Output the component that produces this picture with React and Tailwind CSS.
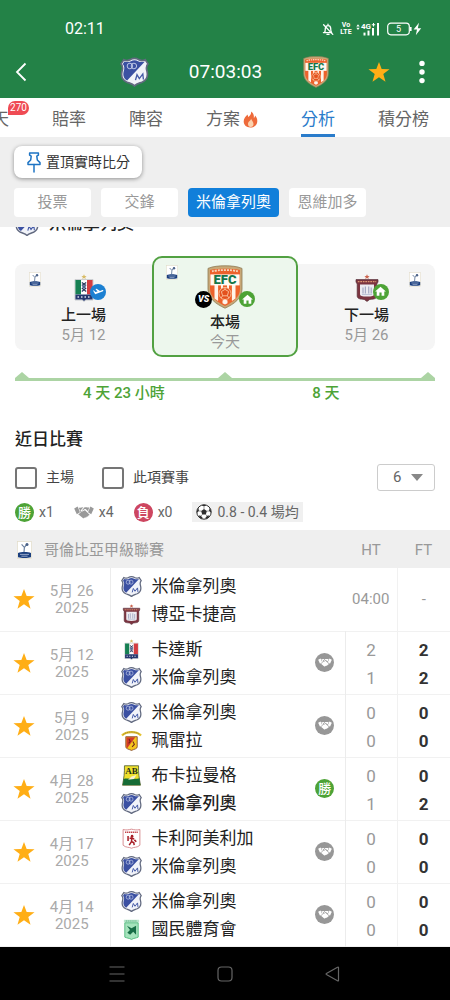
import React, { useState } from 'react';
import { MdHome } from 'react-icons/md';
import clsx from 'clsx';

/* ---------- Icons ---------- */

const Star = ({ className }) => (
    <svg viewBox="0 0 24 24" className={className} fill="#ffae16" aria-hidden="true">
        <polygon points="12,1 14.9,8.8 23.5,9.1 16.7,14.3 19.1,22.6 12,17.7 4.9,22.6 7.3,14.3 0.5,9.1 9.1,8.8" />
    </svg>
);

const BellOff = () => (
    <svg viewBox="0 0 12 13" className="w-3 h-[13px]" fill="none" stroke="#fff" strokeWidth="1.3" strokeLinecap="round" strokeLinejoin="round">
        <path d="M2.5 9.5C3.4 8.4 3.2 7 3.3 5.4C3.5 3.6 4.5 2.6 6 2.6C7.6 2.6 8.6 3.7 8.7 5.4C8.8 7 8.6 8.4 9.6 9.5M1.4 9.6H8.6M5 11.4H7M6 1.2V2.4" />
        <path d="M1.6 1.8L10.8 11.4" />
    </svg>
);

const SignalIcon = () => (
    <svg viewBox="0 0 24 14" className="w-6 h-3.5" fill="#fff">
        <path d="M0.3 4.4L2 2.3L3.7 4.4ZM0.3 5.8H3.7L2 7.9Z" />
        <text x="5" y="7" fontSize="8" fontWeight="700">4G</text>
        <path d="M17 1h1v1.2h1.2v1H18v1.2h-1V3.2h-1.2v-1H17z" />
        <rect x="7.5" y="10.6" width="2" height="2.9" />
        <rect x="11.5" y="8.6" width="2" height="4.9" />
        <rect x="16" y="6" width="2" height="7.5" />
        <rect x="21" y="1" width="2" height="12.5" />
    </svg>
);

const BatteryIcon = () => (
    <svg viewBox="0 0 35 14" className="w-[35px] h-3.5">
        <rect x="0.7" y="1.2" width="21.6" height="11.6" rx="3.2" fill="none" stroke="#fff" strokeWidth="1.2" />
        <path d="M23.8 5v4" stroke="#fff" strokeWidth="1.6" />
        <text x="11.5" y="10" fontSize="9" textAnchor="middle" fill="#fff">5</text>
        <path d="M32 0.8L26.6 7.6H30L28.8 13.2L34.2 6.2H30.8Z" fill="#fff" />
    </svg>
);

const PinIcon = () => (
    <svg viewBox="0 0 14 21" className="w-3.5 h-[21px]" fill="none" stroke="#1e74c4" strokeWidth="1.5" strokeLinejoin="round">
        <path d="M2.6 1H11.4V3.2L9.8 4.2L10.3 8L13 10.6V12.4H1V10.6L3.7 8L4.2 4.2L2.6 3.2Z" />
        <path d="M7 12.4V20" strokeLinecap="round" />
    </svg>
);

const Flame = () => (
    <svg viewBox="0 0 15 17" className="w-[15px] h-[17px]">
        <path d="M8 0.5C8.6 3 7 4.4 5.4 6C4.9 5.3 4.7 4.4 4.8 3.5C2.2 5.5 0.6 8 0.7 10.8C0.9 14.2 3.6 16.5 7.2 16.5C11.2 16.5 14.2 14 14.3 10.2C14.4 7.6 13.2 5.7 12 4.6C12 5.8 11.6 6.6 10.8 7.2C11.2 4.4 10.4 1.9 8 0.5Z" fill="#ee6a3a" />
        <path d="M8 7.5C8.3 9.4 5 10.4 5 13C5 14.8 6.2 16 7.7 16C9.4 16 10.6 14.7 10.5 12.9C10.4 10.9 8.8 9.8 8 7.5Z" fill="#fbd2ae" />
    </svg>
);

const Handshake = ({ className }) => (
    <svg viewBox="0 0 20 13" className={className} fill="currentColor">
        <path d="M0.2 2.6L3.6 0.6L6 6.2L2.8 8.2Z" />
        <path d="M19.8 2.6L16.4 0.6L14 6.2L17.2 8.2Z" />
        <path d="M4.8 1.4C6.4 2 7.6 1.2 9.4 1.3L6.6 4.4C6.6 5.8 8.6 6 10.2 4.4L11 4.3L15.4 8.4C15.8 9.2 14.9 9.9 14.2 9.3C14.5 10.3 13.4 11 12.7 10.3C12.8 11.4 11.6 11.9 10.9 11.2C10.6 12.5 9.3 12.7 8.5 11.8L4.2 8.2L6.6 6.8Z" />
        <path d="M15.3 1.2C13.8 1.9 12.4 1.2 10.6 1.3L8 4.2C8.4 4.8 9.3 4.3 10.2 3.2L11.6 3.1L14 5.2Z" />
    </svg>
);

const SoccerBall = () => (
    <svg viewBox="0 0 16 16" className="w-4 h-4">
        <circle cx="8" cy="8" r="7.2" fill="#fff" stroke="#2f2f2f" strokeWidth="1" />
        <g fill="#2f2f2f">
            <polygon points="8,5 10.9,7.1 9.8,10.5 6.2,10.5 5.1,7.1" />
            <path d="M5.6 1.2L8 2.6L10.4 1.2C9 0.6 7 0.6 5.6 1.2Z" />
            <path d="M0.9 8.8L3 7L2.4 4C1.2 5.4 0.7 7 0.9 8.8Z" />
            <path d="M15.1 8.8L13 7L13.6 4C14.8 5.4 15.3 7 15.1 8.8Z" />
            <path d="M3 13.2L3.6 11L6.4 13.2L6.2 15C4.9 14.7 3.8 14.1 3 13.2Z" />
            <path d="M13 13.2L12.4 11L9.6 13.2L9.8 15C11.1 14.7 12.2 14.1 13 13.2Z" />
        </g>
        <path d="M8 2.6V5M3 7L5.1 7.1M13 7L10.9 7.1M6.2 10.5L5 12.1M9.8 10.5L11 12.1" stroke="#2f2f2f" strokeWidth="0.5" />
    </svg>
);

/* ---------- Club crests ---------- */

const Millonarios = ({ className }) => (
    <svg viewBox="0 0 30 30" className={className}>
        <path d="M4 2.2C6.4 3.6 8.6 3.3 10.6 2.2C12 1.3 13.4 0.9 15 0.9C16.6 0.9 18 1.3 19.4 2.2C21.4 3.3 23.6 3.6 26 2.2L28.9 6.6C26.7 9 27 11.4 28 14.5C29 19 27.3 23.4 23.2 25.3C20 26.6 17.2 26.9 15 29.3C12.8 26.9 10 26.6 6.8 25.3C2.7 23.4 1 19 2 14.5C3 11.4 3.3 9 1.1 6.6Z" fill="#f1f3f9" stroke="#626a80" strokeWidth="1.8" />
        <path d="M4.6 4.2C7 5.2 9.3 4.8 11.3 3.8C13.6 2.6 16.4 2.6 18.7 3.8C20.7 4.8 23 5.2 25.8 4.2L7.4 23.8C4 22 2.9 18.4 3.7 15C4.7 11.6 5 9.2 2.9 6.7Z" fill="#3b50a2" />
        <ellipse cx="10.2" cy="8.8" rx="2.8" ry="2.9" fill="none" stroke="#cdd5ef" strokeWidth="0.9" />
        <ellipse cx="14.4" cy="8.8" rx="2.8" ry="2.9" fill="none" stroke="#cdd5ef" strokeWidth="0.9" />
        <path d="M16 23.4L17.6 17.8L20 21.8L23.6 17L24.2 22.8" fill="none" stroke="#4459a6" strokeWidth="1.4" />
    </svg>
);

const Envigado = ({ className }) => (
    <svg viewBox="0 0 36 44" className={className}>
        <path d="M1 3.4C6 1.3 12 0.8 18 0.8S30 1.3 35 3.4V24C35 33.5 27 39 18 43.2C9 39 1 33.5 1 24Z" fill="#c8a877" stroke="#8d7b55" strokeWidth="0.8" />
        <path d="M3 5C8 3.4 28 3.4 33 5V24C33 32 26 37 18 41C10 37 3 32 3 24Z" fill="#ed622c" />
        <path d="M5 6.4C11 4.6 25 4.6 31 6.4" fill="none" stroke="#f6d8c0" strokeWidth="1.8" strokeDasharray="2 1" />
        <path d="M7.5 20h3.6v16L7.5 33.6ZM24.9 20h3.6v13.6L24.9 36ZM14 20h2v5h-2zM20 20h2v5h-2z" fill="#fff4ea" />
        <rect x="3.4" y="9.4" width="29.2" height="11" fill="#fffaf3" />
        <text x="18" y="19.2" textAnchor="middle" fontSize="13" fontWeight="900" fill="#16774a">EFC</text>
        <circle cx="18" cy="28.5" r="6" fill="#e4511d" stroke="#fbc7a4" strokeWidth="0.9" />
        <path d="M14.4 26.5L18 24.4L21.6 26.5L20.4 30.8H15.6ZM18 22.6V24.4M15.6 30.8L14 33M20.4 30.8L22 33" fill="none" stroke="#fbc7a4" strokeWidth="0.9" />
        <path d="M15.5 35.5L18 34.6L20.5 35.5V38.2L18 39.6L15.5 38.2Z" fill="#fff4ea" />
    </svg>
);

const Caldas = ({ className }) => (
    <svg viewBox="0 0 20 28" className={className}>
        <polygon points="10,0.2 10.8,2 12.6,2.1 11.2,3.2 11.7,5 10,4 8.3,5 8.8,3.2 7.4,2.1 9.2,2" fill="#d8bc68" />
        <path d="M1 5.6H19V26H12L10 27.5L8 26H1Z" fill="#fff" stroke="#b5b9bd" strokeWidth="0.7" />
        <rect x="1.4" y="6" width="5.6" height="14.4" fill="#168053" />
        <rect x="13" y="6" width="5.6" height="14.4" fill="#d33c41" />
        <path d="M7.8 8.5L12.2 11.5M12.2 8.5L7.8 11.5M7.8 14L12.2 17.5M12.2 14L7.8 17.5" stroke="#2c3c60" strokeWidth="1.2" />
        <circle cx="10" cy="12.8" r="1.8" fill="#4f648e" />
        <path d="M1.4 20.4H18.6V25.6H11.8L10 27L8.2 25.6H1.4Z" fill="#26386f" />
        <path d="M3.5 23H16.5" stroke="#d9ddec" strokeWidth="1.5" strokeDasharray="1.5 2" />
    </svg>
);

const Boyaca = ({ className }) => (
    <svg viewBox="0 0 24 28" className={className}>
        <polygon points="12,0.2 12.8,2 14.6,2.1 13.2,3.2 13.7,5 12,4 10.3,5 10.8,3.2 9.4,2.1 11.2,2" fill="#cc6650" />
        <path d="M1 5.6H23V8L21.8 10V22C21.8 24.6 19 25.2 14.8 25.4L12 27.4L9.2 25.4C5 25.2 2.2 24.6 2.2 22V10L1 8Z" fill="#7b3440" stroke="#58303a" strokeWidth="0.7" />
        <path d="M2.8 7.7H21.2" stroke="#dc9572" strokeWidth="1.3" strokeDasharray="1.7 0.8" />
        <path d="M5 10.4H19V20C19 22 17 22.6 12 22.6S5 22 5 20Z" fill="#eceaf0" />
        <path d="M8 13.4V19.6M10.4 12.4V19.6M13.7 12.4V19.6M16.2 13.4V19.6" stroke="#a5aac4" strokeWidth="1.2" />
        <path d="M7 20.4H17" stroke="#bac0d4" strokeWidth="1" />
    </svg>
);

const Pereira = ({ className }) => (
    <svg viewBox="0 0 22 22" className={className}>
        <path d="M1 5.8C5 1 17 1 21 5.8" fill="none" stroke="#e4c231" strokeWidth="2.2" />
        <path d="M2.6 4.6C7 1.2 15 1.2 19.4 4.6" fill="none" stroke="#776a26" strokeWidth="0.8" strokeDasharray="1.2 1" />
        <path d="M5 7H17V17.6C17 19.8 14 20 11 21.4C8 20 5 19.8 5 17.6Z" fill="#f5c61d" stroke="#7a3b20" strokeWidth="0.8" />
        <path d="M5.6 7.6H15L6.4 19C5.8 18.6 5.6 18 5.6 17.4Z" fill="#d13a2a" />
        <path d="M8.4 9.4L9.6 12L8 14M12.4 12L14 15L11.6 17.6" fill="none" stroke="#6d2417" strokeWidth="1.1" />
    </svg>
);

const Bucaramanga = ({ className }) => (
    <svg viewBox="0 0 20 22" className={className}>
        <path d="M2.6 0.8H17.4C17.2 8 18 14 19.4 21.2H0.6C2 14 2.8 8 2.6 0.8Z" fill="#efe02d" stroke="#41502b" strokeWidth="0.8" />
        <path d="M1.7 14.6C6 13 13 15.6 18.3 13.8L19.2 20.9H0.9Z" fill="#176c36" />
        <path d="M6.4 15.4L10 12L15 10.6L12.6 14.6Z" fill="#f7f2d0" />
        <text x="10" y="9.4" textAnchor="middle" fontSize="9.5" fontWeight="700" fill="#243019" fontFamily="Liberation Serif">AB</text>
    </svg>
);

const America = ({ className }) => (
    <svg viewBox="0 0 20 22" className={className}>
        <path d="M1.2 1.6C4 2.4 7 2 10 1.2C13 2 16 2.4 18.8 1.6V18C16 20.8 12.4 19.8 10 21.2C7.6 19.8 4 20.8 1.2 18Z" fill="#fff" stroke="#d78b8f" strokeWidth="1" />
        <path d="M3.2 4.4H16.8" stroke="#c3454b" strokeWidth="1.5" strokeDasharray="1.4 0.6" />
        <circle cx="10.6" cy="8.6" r="1.4" fill="#a81d26" />
        <path d="M8 11L10.4 10.4L12.8 11.6M10.4 10.4L10 14.2L7.6 18M10 14.2L12.4 15.4L12.8 18M6.4 8.4V13.6M13 12.4L15 14.4" fill="none" stroke="#a81d26" strokeWidth="1.6" />
    </svg>
);

const Nacional = ({ className }) => (
    <svg viewBox="0 0 18 22" className={className}>
        <path d="M1 0.8H17V3.4H1Z" fill="#b9e6cb" />
        <path d="M3 2.1H15" stroke="#3ba46b" strokeWidth="0.9" strokeDasharray="1.2 0.8" />
        <path d="M2 4H16V19C14 20 11.4 20 9 21.4C6.6 20 4 20 2 19Z" fill="#a5e3bc" stroke="#56bd81" strokeWidth="1" />
        <path d="M4.2 7L9 9.8L13.8 7V16.6L10.8 13.4L7.6 16.6L4.6 14.4L7.4 11.6Z" fill="#176d46" />
    </svg>
);

const LeagueLogo = ({ className }) => (
    <svg viewBox="0 0 15 18" className={className}>
        <rect x="0.5" y="0.5" width="14" height="17" fill="#fff" stroke="#e2dcc8" strokeWidth="0.7" />
        <path d="M7 11L7.4 6.4L4.6 3.4M7.4 6.4L10.4 2.6" fill="none" stroke="#6b809f" strokeWidth="1.2" />
        <circle cx="10" cy="3.6" r="1.5" fill="#4b6288" />
        <path d="M1 12C4 10.8 11 10.8 14 12V16.2C11 17.2 4 17.2 1 16.2Z" fill="#1b3f7e" />
        <path d="M3 13.4H12M4.4 15.2H10.6" stroke="#c8d3e6" strokeWidth="0.7" />
    </svg>
);

/* ---------- Small badges ---------- */

const HomeBadge = ({ className }) => (
    <span className={clsx('absolute flex items-center justify-center w-4 h-4 rounded-full bg-[#4da336] text-white', className)}>
        <MdHome size={13} />
    </span>
);

const AwayBadge = ({ className }) => (
    <span className={clsx('absolute flex items-center justify-center w-4 h-4 rounded-full bg-[#1c80d2]', className)}>
        <svg viewBox="0 0 12 12" className="w-3 h-3" fill="#fff">
            <path d="M1 4.6L2 4.4L3.4 5.9L5.6 5.6L3.4 3L4.6 2.7L8 5L10.4 4.1C11.4 3.8 11.8 4.8 11 5.2L3.2 8.3Z" />
        </svg>
    </span>
);

const ResultBadge = ({ result }) => (
    <span
        className={clsx(
            'inline-flex items-center justify-center w-[19px] h-[19px] rounded-full text-white text-[13px] leading-none font-medium',
            result === '勝' && 'bg-[#4da336]',
            result === '負' && 'bg-[#cd4660]',
            result === '和' && 'bg-[#979797]'
        )}
    >
        {result === '和' ? <Handshake className="w-3.5 h-[9px]" /> : result}
    </span>
);

/* ---------- Data ---------- */

const teams = {
    millonarios: { name: '米倫拿列奧', Crest: Millonarios },
    boyaca: { name: '博亞卡捷高', Crest: Boyaca },
    caldas: { name: '卡達斯', Crest: Caldas },
    pereira: { name: '珮雷拉', Crest: Pereira },
    bucaramanga: { name: '布卡拉曼格', Crest: Bucaramanga },
    america: { name: '卡利阿美利加', Crest: America },
    nacional: { name: '國民體育會', Crest: Nacional },
};

const matches = [
    { date: '5月 26', home: 'millonarios', away: 'boyaca', time: '04:00' },
    { date: '5月 12', home: 'caldas', away: 'millonarios', ht: [2, 1], ft: [2, 2], result: '和' },
    { date: '5月 9', home: 'millonarios', away: 'pereira', ht: [0, 0], ft: [0, 0], result: '和' },
    { date: '4月 28', home: 'bucaramanga', away: 'millonarios', ht: [0, 1], ft: [0, 2], result: '勝', winner: 'millonarios' },
    { date: '4月 17', home: 'america', away: 'millonarios', ht: [0, 0], ft: [0, 0], result: '和' },
    { date: '4月 14', home: 'millonarios', away: 'nacional', ht: [0, 0], ft: [0, 0], result: '和' },
];

const sections = ['投票', '交鋒', '米倫拿列奧', '恩維加多'];

/* ---------- Page parts ---------- */

const Header = () => (
    <header className="bg-[#238247] text-white">
        <div className="flex items-center justify-between h-[46px] pt-3 pl-[65px] pr-7">
            <span className="text-[16px]">02:11</span>
            <div className="flex items-center">
                <BellOff />
                <span className="ml-1.5 w-3 text-center text-[7px] leading-[7px] font-bold">
                    Vo<br />LTE
                </span>
                <span className="ml-1"><SignalIcon /></span>
                <span className="ml-[7px]"><BatteryIcon /></span>
            </div>
        </div>
        <div className="grid grid-cols-[1fr_auto_1fr] items-center h-[52px] pl-[15px] pr-6">
            <button type="button" aria-label="返回" className="w-6">
                <svg viewBox="0 0 12 20" className="w-3 h-5" fill="none" stroke="#fff" strokeWidth="1.8">
                    <path d="M10.5 1.5L2 10L10.5 18.5" />
                </svg>
            </button>
            <div className="flex items-center gap-10 pl-[9px]">
                <Millonarios className="w-[29px] h-[30px]" />
                <span className="text-[19px]">07:03:03</span>
                <Envigado className="w-7 h-8" />
            </div>
            <div className="flex items-center justify-end gap-7">
                <button type="button" aria-label="收藏"><Star className="w-[22px] h-[22px]" /></button>
                <button type="button" aria-label="更多">
                    <svg viewBox="0 0 8 24" className="w-2 h-6" fill="#fff">
                        <circle cx="4" cy="3.4" r="2.7" />
                        <circle cx="4" cy="12" r="2.7" />
                        <circle cx="4" cy="20.6" r="2.7" />
                    </svg>
                </button>
            </div>
        </div>
    </header>
);

const Tabs = () => (
    <nav className="flex gap-[43px] h-[39px] overflow-hidden bg-white text-[17px] text-[#666] whitespace-nowrap">
        <button type="button" className="relative shrink-0 -ml-2 w-[17px] pt-1">
            天
            <span className="absolute left-4 top-[3px] w-[21px] h-3.5 rounded-full rounded-bl-none bg-[#ef4b54] text-white text-[10px] leading-[14px] text-center">
                270
            </span>
        </button>
        <button type="button" className="shrink-0 pt-1">賠率</button>
        <button type="button" className="shrink-0 pt-1">陣容</button>
        <button type="button" className="shrink-0 flex items-center gap-[3px] pt-1">
            方案
            <Flame />
        </button>
        <button type="button" className="shrink-0 pt-[7px] border-b-3 border-[#2a7ccb] text-[#2a7ccb]">分析</button>
        <button type="button" className="shrink-0 pt-1">積分榜</button>
    </nav>
);

const SectionBar = () => {
    const [active, setActive] = useState('米倫拿列奧');
    return (
        <div className="relative z-10 bg-[#efefef] px-3.5 pt-[9px] pb-2.5">
            <button type="button" className="flex items-center gap-[5px] h-8 pl-[13px] pr-3 rounded-lg bg-white text-[14px] text-[#333] shadow-[0_1px_4px_rgba(0,0,0,0.4)]">
                <PinIcon />
                置頂實時比分
            </button>
            <div className="flex gap-2.5 mt-2.5">
                {sections.map((name) => (
                    <button
                        key={name}
                        type="button"
                        onClick={() => setActive(name)}
                        className={clsx(
                            'h-[29px] min-w-[77px] px-2 rounded text-[15px]',
                            active === name ? 'bg-[#117fda] text-white' : 'bg-white text-[#999]'
                        )}
                    >
                        {name}
                    </button>
                ))}
            </div>
        </div>
    );
};

const FixtureCards = () => (
    <div className="grid grid-cols-[1fr_146px_1fr] items-center mt-5 mx-[15px] text-[15px] leading-5 text-center">
        <div className="relative flex flex-col items-center h-[86px] pt-2.5 rounded-l-lg bg-[#f5f5f5]">
            <LeagueLogo className="absolute left-3.5 top-2 w-3 h-[15px]" />
            <div className="relative">
                <Caldas className="w-5 h-7" />
                <AwayBadge className="left-4 top-2.5" />
            </div>
            <span className="mt-[3px] font-medium text-[#222]">上一場</span>
            <span className="text-[#999]">5月 12</span>
        </div>
        <div className="relative flex flex-col items-center h-[101px] pt-[7px] rounded-[10px] border-[2px] border-[#52a142] bg-[#edf7ed]">
            <LeagueLogo className="absolute left-3 top-[7px] w-3 h-[15px]" />
            <div className="relative">
                <Envigado className="w-9 h-11" />
                <span className="absolute -left-3 top-[26px] w-[17px] h-[17px] rounded-full bg-black text-white text-[9px] leading-[17px] font-black italic">
                    VS
                </span>
                <HomeBadge className="left-8 top-[26px]" />
            </div>
            <span className="mt-[3px] font-medium text-[#222]">本場</span>
            <span className="text-[#999]">今天</span>
        </div>
        <div className="relative flex flex-col items-center h-[86px] pt-2.5 rounded-r-lg bg-[#f5f5f5]">
            <LeagueLogo className="absolute right-3.5 top-2 w-3 h-[15px]" />
            <div className="relative">
                <Boyaca className="w-6 h-7" />
                <HomeBadge className="left-[18px] top-2.5" />
            </div>
            <span className="mt-[3px] font-medium text-[#222]">下一場</span>
            <span className="text-[#999]">5月 26</span>
        </div>
    </div>
);

const Triangle = () => (
    <svg viewBox="0 0 14 6" className="w-3.5 h-1.5" fill="#acd4a4">
        <polygon points="7,0 14,6 0,6" />
    </svg>
);

const Timeline = () => (
    <div className="mt-[15px] mx-[15px]">
        <div className="flex justify-between border-b-3 border-[#acd4a4]">
            <Triangle />
            <Triangle />
            <Triangle />
        </div>
        <div className="grid grid-cols-2 px-2 mt-0.5 text-center text-[15px] leading-5 font-medium text-[#4da336]">
            <span>4 天 23 小時</span>
            <span>8 天</span>
        </div>
    </div>
);

const Filters = () => (
    <div className="flex items-center justify-between mt-[13px] px-[15px] text-[14px] text-[#444]">
        <div className="flex items-center gap-7">
            {['主場', '此項賽事'].map((label) => (
                <label key={label} className="flex items-center gap-[9px]">
                    <input type="checkbox" className="appearance-none w-[22px] h-[22px] rounded-[3px] border-2 border-[#757575] checked:bg-[#117fda]" />
                    {label}
                </label>
            ))}
        </div>
        <div className="relative">
            <select aria-label="場數" className="appearance-none block w-[58px] h-[27px] pl-[15px] rounded-[3px] border border-[#ccc] bg-white text-[15px] text-[#666]">
                <option>6</option>
                <option>10</option>
                <option>20</option>
            </select>
            <svg viewBox="0 0 12 7" className="absolute right-3 top-2.5 w-3 h-[7px] pointer-events-none" fill="#888">
                <polygon points="0,0 12,0 6,7" />
            </svg>
        </div>
    </div>
);

const Summary = () => (
    <div className="flex items-center gap-5 h-5 mt-[11px] px-[15px] text-[14px] text-[#666]">
        <span className="flex items-center gap-[5px]"><ResultBadge result="勝" />x1</span>
        <span className="flex items-center gap-[5px]"><Handshake className="w-5 h-[13px] text-[#999]" />x4</span>
        <span className="flex items-center gap-[5px]"><ResultBadge result="負" />x0</span>
        <span className="flex items-center gap-[5px] h-5 px-1 bg-[#f0f0f0] whitespace-nowrap">
            <SoccerBall />
            0.8 - 0.4 場均
        </span>
    </div>
);

const TeamLine = ({ id, bold }) => {
    const { name, Crest } = teams[id];
    return (
        <div className={clsx('flex items-center gap-2.5 h-7', bold && 'font-medium')}>
            <Crest className="w-[21px] h-[21px]" />
            {name}
        </div>
    );
};

const MatchTable = () => (
    <table className="w-full mt-2 table-fixed border-collapse">
        <colgroup>
            <col className="w-12" />
            <col className="w-[62px]" />
            <col />
            <col className="w-10" />
            <col className="w-[52px]" />
            <col className="w-[53px]" />
        </colgroup>
        <thead>
            <tr className="h-[38px] bg-[#efefef] text-[15px] text-[#999]">
                <th colSpan={4} className="p-0 pt-0.5 font-normal">
                    <div className="flex items-center gap-3 pl-[17px]">
                        <LeagueLogo className="w-[15px] h-[18px]" />
                        哥倫比亞甲級聯賽
                    </div>
                </th>
                <th className="p-0 pt-0.5 font-normal">HT</th>
                <th className="p-0 pt-0.5 font-normal">FT</th>
            </tr>
        </thead>
        <tbody>
            {matches.map((m) => (
                <tr key={m.date} className="h-[63px] border-b border-[#f1f1f1]">
                    <td className="p-0">
                        <button type="button" aria-label="收藏" className="block mx-auto"><Star className="w-[22px] h-[22px]" /></button>
                    </td>
                    <td className="p-0 pt-0.5 pr-3.5 text-center text-[15px] leading-[17px] text-[#aaa] whitespace-nowrap">
                        {m.date}<br />2025
                    </td>
                    <td className="p-0 pt-0.5 pl-2.5 border-l border-[#ececec] text-[17px] text-[#222] whitespace-nowrap">
                        <TeamLine id={m.home} bold={m.winner === m.home} />
                        <TeamLine id={m.away} bold={m.winner === m.away} />
                    </td>
                    <td className="p-0 text-center">
                        {m.result && <span className="flex justify-center"><ResultBadge result={m.result} /></span>}
                    </td>
                    {m.time ? (
                        <>
                            <td className="p-0 text-center text-[15px] text-[#999]">{m.time}</td>
                            <td className="p-0 border-l border-[#f1f1f1] text-center text-[15px] text-[#999]">-</td>
                        </>
                    ) : (
                        <>
                            <td className="p-0 pt-0.5 border-l border-[#ececec] text-center text-[17px] leading-7 text-[#999]">
                                {m.ht[0]}<br />{m.ht[1]}
                            </td>
                            <td className="p-0 pt-0.5 border-l border-[#f1f1f1] text-center text-[17px] leading-7 font-bold text-[#333]">
                                {m.ft[0]}<br />{m.ft[1]}
                            </td>
                        </>
                    )}
                </tr>
            ))}
        </tbody>
    </table>
);

const SystemNav = () => (
    <footer className="grid grid-cols-[1fr_auto_1fr] items-center h-[54px] bg-black">
        <button type="button" aria-label="最近" className="justify-self-end mr-[90px]">
            <svg viewBox="0 0 18 18" className="w-[18px] h-[18px]" stroke="#666" strokeWidth="1.2">
                <path d="M1.5 2H16.5M1.5 9H16.5M1.5 16H16.5" />
            </svg>
        </button>
        <button type="button" aria-label="主畫面">
            <svg viewBox="0 0 18 18" className="w-[18px] h-[18px]" fill="none" stroke="#666" strokeWidth="1.2">
                <rect x="2" y="2" width="14" height="14" rx="3.5" />
            </svg>
        </button>
        <button type="button" aria-label="返回上頁" className="justify-self-start ml-[90px]">
            <svg viewBox="0 0 18 18" className="w-[18px] h-[18px]" fill="none" stroke="#666" strokeWidth="1.2" strokeLinejoin="round">
                <path d="M14.5 2.6V15.4C14.5 16 14 16.1 13.5 15.8L2.4 9.6C2 9.3 2 8.7 2.4 8.4L13.5 2.2C14 1.9 14.5 2 14.5 2.6Z" />
            </svg>
        </button>
    </footer>
);

export default function App() {
    return (
        <div lang="zh-Hant" className="bg-white font-['Roboto','Noto_Sans_CJK_TC',sans-serif]">
            <Header />
            <Tabs />
            <SectionBar />
            <main>
                {/* scrolled partly under the section bar */}
                <div className="flex items-center gap-2.5 h-6 -mt-[15px] pl-[15px] text-[17px] font-medium text-[#222]">
                    <Millonarios className="w-6 h-6" />
                    米倫拿列奧
                </div>
                <FixtureCards />
                <Timeline />
                <h2 className="mt-6 px-[15px] text-[17px] leading-6 font-medium text-[#222]">近日比賽</h2>
                <Filters />
                <Summary />
                <MatchTable />
            </main>
            <SystemNav />
        </div>
    );
}
